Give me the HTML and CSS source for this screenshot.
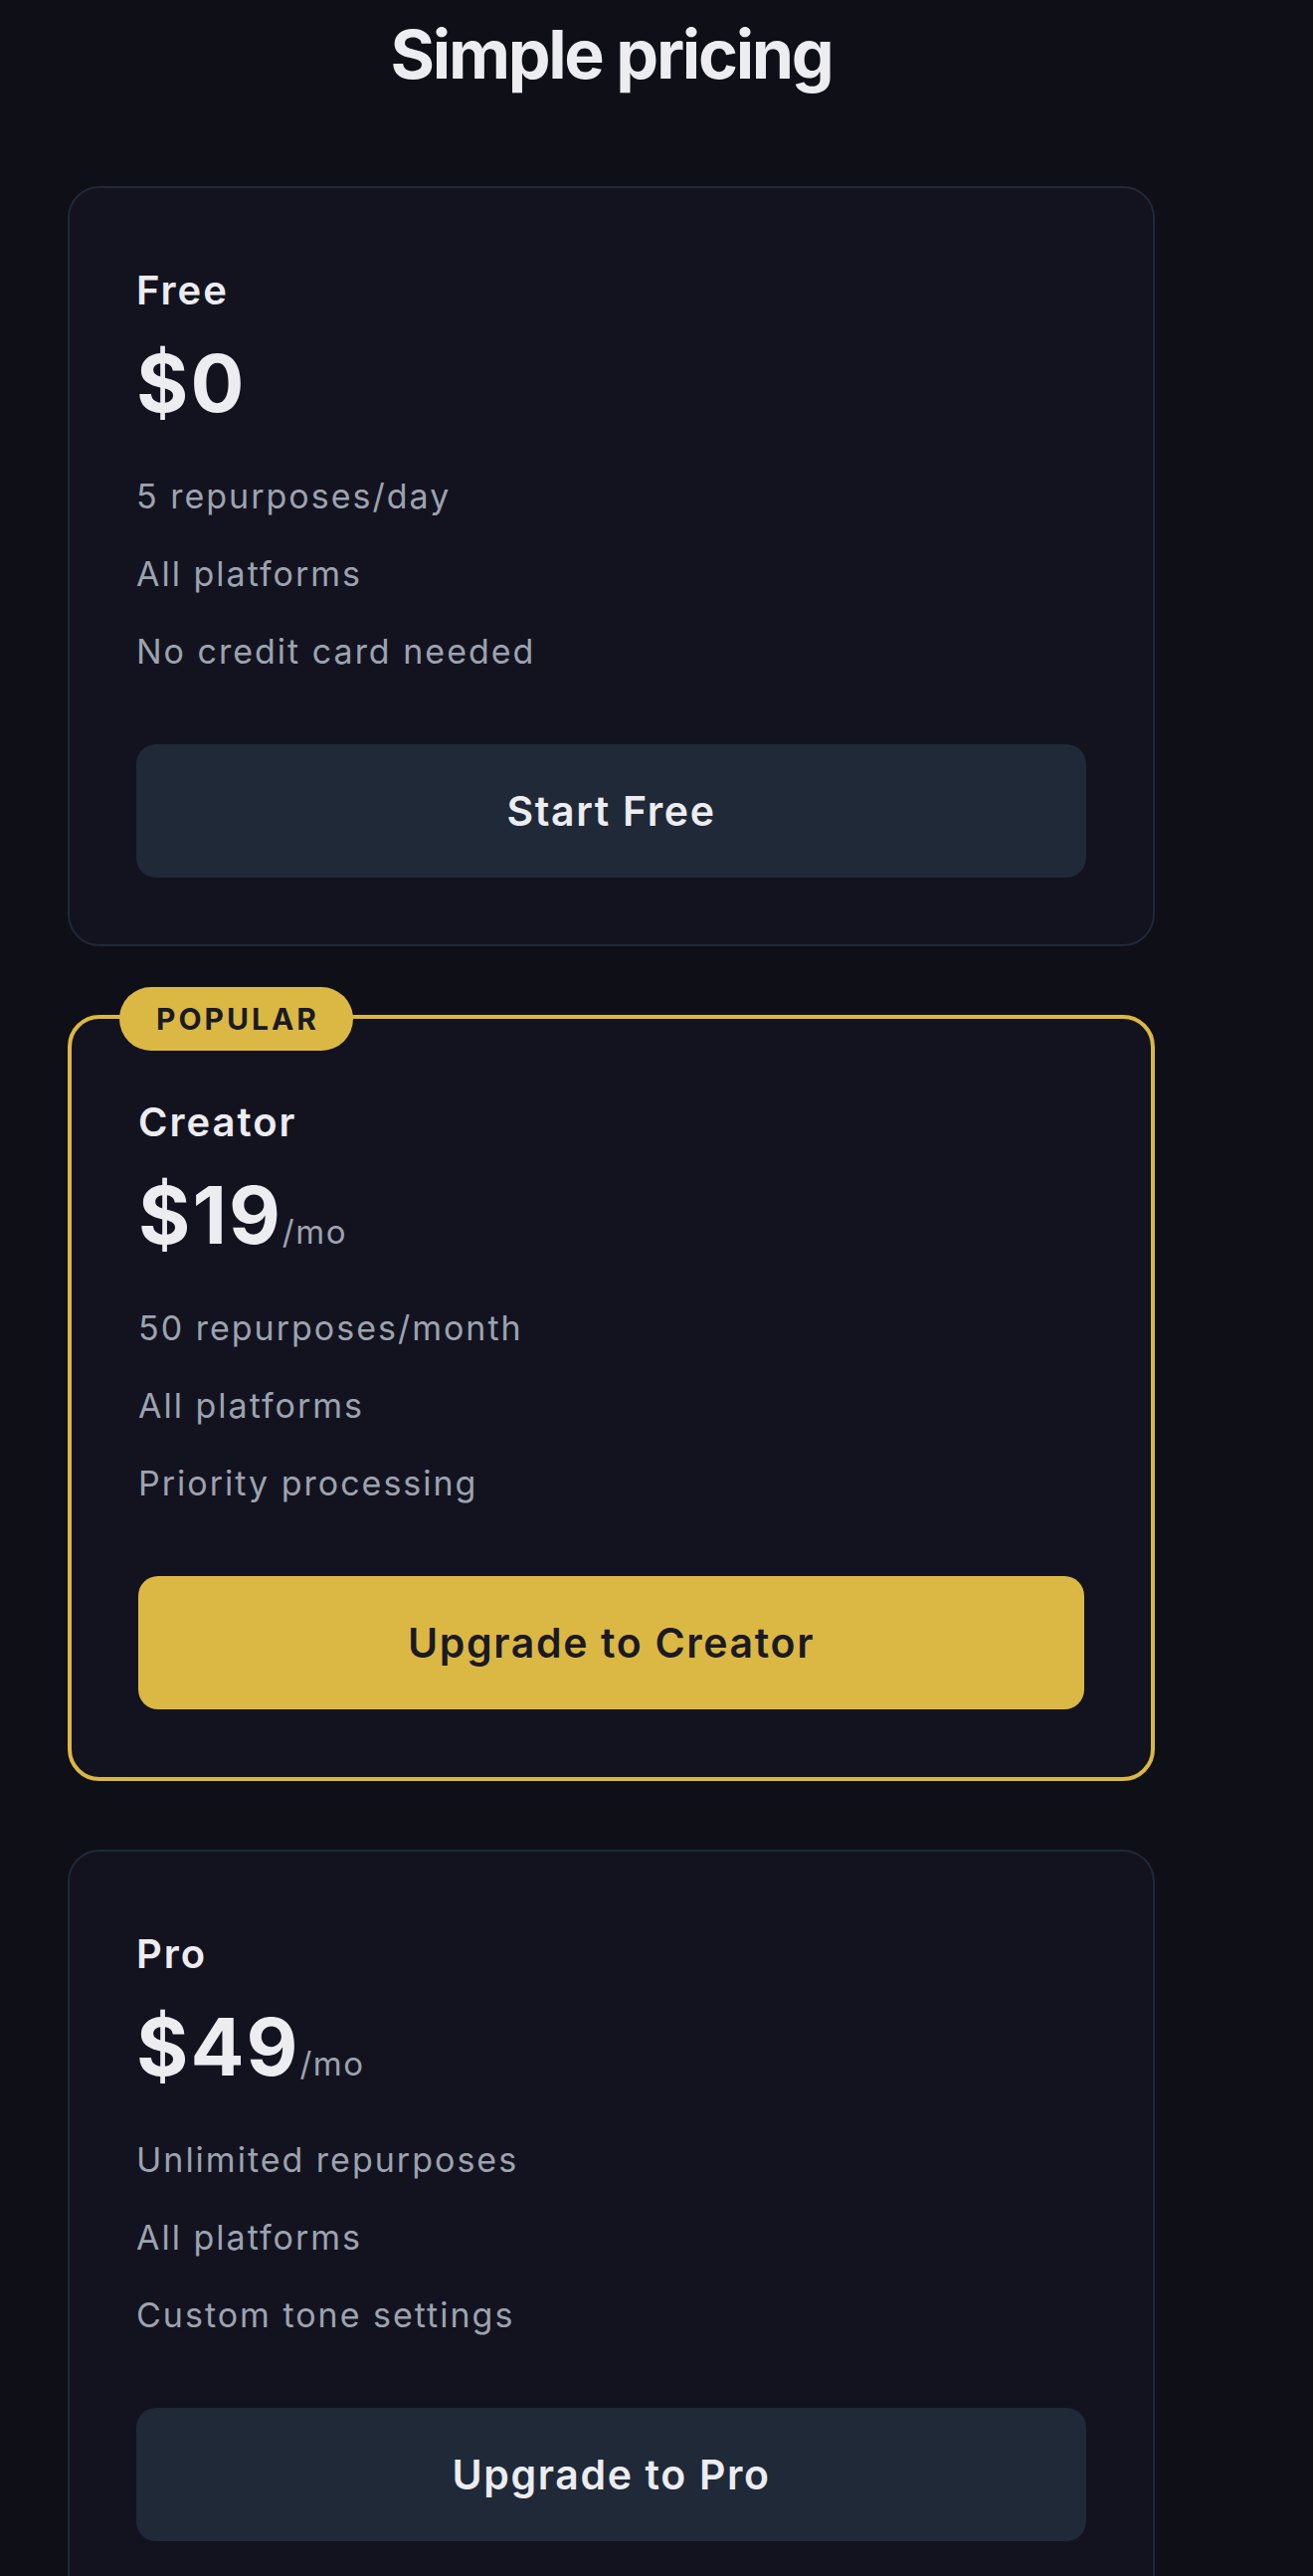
FILE: index.html
```html
<!DOCTYPE html>
<html lang="en">
<head>
<meta charset="utf-8">
<title>Simple pricing</title>
<link rel="stylesheet" href="styles.css">
</head>
<body>
<main class="page">
  <h1 class="title">Simple pricing</h1>
  <section class="plans">
    <article class="card">
      <h2 class="plan-name">Free</h2>
      <div class="price"><span class="amount">$0</span></div>
      <ul class="features">
        <li>5 repurposes/day</li>
        <li>All platforms</li>
        <li>No credit card needed</li>
      </ul>
      <button class="btn">Start Free</button>
    </article>
    <article class="card card-popular">
      <span class="badge">POPULAR</span>
      <h2 class="plan-name">Creator</h2>
      <div class="price"><span class="amount">$19</span><span class="period">/mo</span></div>
      <ul class="features">
        <li>50 repurposes/month</li>
        <li>All platforms</li>
        <li>Priority processing</li>
      </ul>
      <button class="btn btn-gold">Upgrade to Creator</button>
    </article>
    <article class="card">
      <h2 class="plan-name">Pro</h2>
      <div class="price"><span class="amount">$49</span><span class="period">/mo</span></div>
      <ul class="features">
        <li>Unlimited repurposes</li>
        <li>All platforms</li>
        <li>Custom tone settings</li>
      </ul>
      <button class="btn">Upgrade to Pro</button>
    </article>
  </section>
</main>
</body>
</html>
```
FILE: styles.css
```css
* { box-sizing: border-box; }
html, body { margin: 0; padding: 0; }
body {
  background: #0e0f17;
  color: #ececf1;
  font-family: Inter, "Noto Sans", sans-serif;
}
.page {
  width: 1093px;
  margin-left: 68px;
}
.title {
  margin: 14px 0 0;
  font-size: 68px;
  line-height: 80px;
  font-weight: 700;
  letter-spacing: -2.3px;
  text-align: center;
  color: #ececf1;
}
.plans {
  margin-top: 93px;
  display: flex;
  flex-direction: column;
  gap: 69px;
}
.card {
  position: relative;
  background: #131320;
  border: 2px solid #1f2937;
  border-radius: 32px;
  padding: 67px;
}
.card-popular {
  border: 4px solid #dbb843;
  padding: 68px 67px 68px 67px;
}
.badge {
  position: absolute;
  top: -32px;
  left: 48px;
  height: 64px;
  padding: 0 34px 0 37px;
  border-radius: 32px;
  background: #dbb843;
  color: #1a1a26;
  font-size: 30px;
  font-weight: 700;
  letter-spacing: 3px;
  line-height: 64px;
}
.plan-name {
  margin: 8px 0 0;
  font-size: 40px;
  line-height: 56px;
  font-weight: 600;
  letter-spacing: 2px;
  color: #ececf1;
}
.price {
  margin-top: 17px;
  line-height: 96px;
  height: 96px;
}
.amount {
  font-size: 80px;
  font-weight: 700;
  letter-spacing: 2px;
  color: #ececf1;
}
.period {
  font-size: 33px;
  color: #9ca3af;
  font-weight: 400;
  letter-spacing: 1.5px;
}
.features {
  list-style: none;
  margin: 27px 0 0;
  padding: 0;
}
.features li {
  font-size: 34px;
  line-height: 48px;
  padding: 15px 0;
  letter-spacing: 2px;
  color: #9ca3af;
}
.btn {
  display: block;
  width: 100%;
  height: 134px;
  margin-top: 54px;
  border: none;
  border-radius: 20px;
  background: #1f2937;
  color: #ececf1;
  font-family: Inter, "Noto Sans", sans-serif;
  font-size: 41px;
  font-weight: 600;
  letter-spacing: 1.65px;
}
.btn-gold {
  background: #dbb843;
  color: #1a1a26;
}
```
